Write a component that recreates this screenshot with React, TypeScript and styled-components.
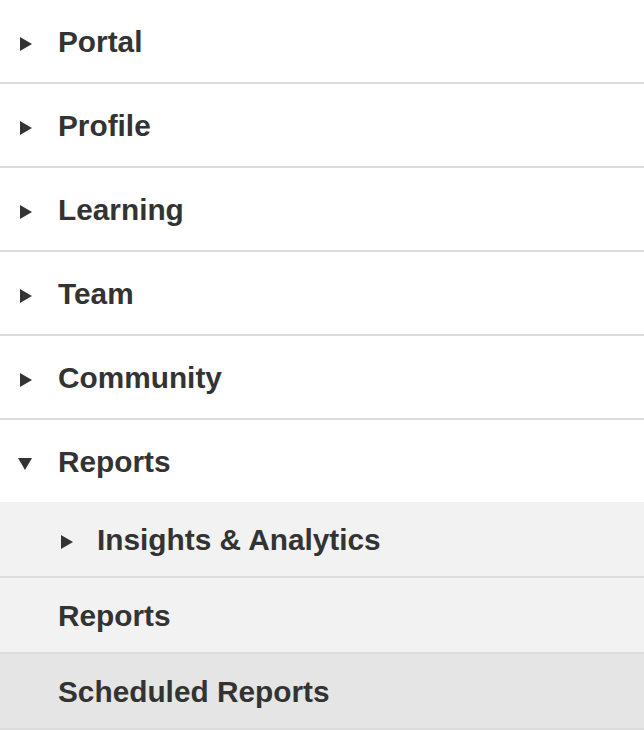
import { createGlobalStyle } from 'styled-components'
import styled from 'styled-components'

const GlobalStyle = createGlobalStyle`
  body {
    margin: 0;
    background: #fff;
    font-family: 'Liberation Sans', Arial, Helvetica, sans-serif;
  }
`

const Menu = styled.nav`
  width: 644px;
  display: flex;
  flex-direction: column;
`

const Row = styled.div<{ $open?: boolean }>`
  display: flex;
  align-items: center;
  height: 82px;
  padding-left: 20px;
  border-bottom: ${({ $open }) => ($open ? 'none' : '2px solid #dcdcdc')};
  background: #fff;
`

const SubList = styled.div`
  display: flex;
  flex-direction: column;
  background: #f2f2f2;
`

const SubRow = styled.div<{ $active?: boolean; $indent: number }>`
  display: flex;
  align-items: center;
  height: 74px;
  padding-left: ${({ $indent }) => $indent}px;
  border-bottom: 2px solid #dcdcdc;
  background: ${({ $active }) => ($active ? '#e5e5e5' : '#f2f2f2')};
`

const ArrowBox = styled.span<{ $width: number }>`
  display: flex;
  align-items: center;
  width: ${({ $width }) => $width}px;
  flex-shrink: 0;
  padding-top: 6px;
`

const Caret = styled.span<{ $down?: boolean }>`
  display: block;
  width: 0;
  height: 0;
  ${({ $down }) =>
    $down
      ? `
    margin-left: -2px;
    border-left: 7.5px solid transparent;
    border-right: 7.5px solid transparent;
    border-top: 12px solid #333;
  `
      : `
    border-top: 7px solid transparent;
    border-bottom: 7px solid transparent;
    border-left: 12.5px solid #333;
  `}
`

const Label = styled.span`
  color: #333;
  font-size: 29.8px;
  font-weight: 700;
  line-height: 1;
  padding-top: 2px;
`

const items = ['Portal', 'Profile', 'Learning', 'Team', 'Community']

const App = () => {
  return (
    <>
      <GlobalStyle />
      <Menu>
        {items.map((item) => (
          <Row key={item}>
            <ArrowBox $width={38}>
              <Caret />
            </ArrowBox>
            <Label>{item}</Label>
          </Row>
        ))}
        <Row $open>
          <ArrowBox $width={38}>
            <Caret $down />
          </ArrowBox>
          <Label>Reports</Label>
        </Row>
        <SubList>
          <SubRow $indent={61}>
            <ArrowBox $width={36}>
              <Caret />
            </ArrowBox>
            <Label>Insights &amp; Analytics</Label>
          </SubRow>
          <SubRow $indent={58}>
            <Label>Reports</Label>
          </SubRow>
          <SubRow $indent={58} $active>
            <Label>Scheduled Reports</Label>
          </SubRow>
        </SubList>
      </Menu>
    </>
  )
}

export default App
